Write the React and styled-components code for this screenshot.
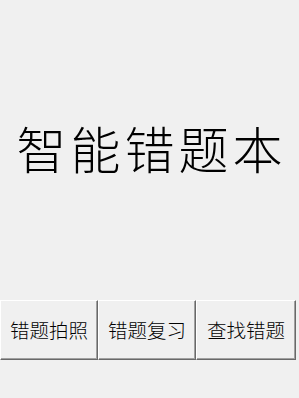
import styled, { createGlobalStyle } from "styled-components";

const GlobalStyle = createGlobalStyle`
  html, body {
    margin: 0;
    padding: 0;
    background: #f0f0f0;
  }
`;

const Form = styled.div`
  display: flex;
  flex-direction: column;
  width: 299px;
  height: 398px;
  background: #f0f0f0;
`;

const Title = styled.div`
  display: flex;
  justify-content: center;
  align-items: center;
  height: 300px;
  padding-bottom: 7px;
  padding-left: 4px;
  font-family: "Noto Sans CJK SC", sans-serif;
  font-weight: 300;
  font-size: 50px;
  letter-spacing: 4px;
  color: #000;
  box-sizing: border-box;
`;

const ButtonRow = styled.div`
  display: flex;
  gap: 0;
`;

const Button = styled.button`
  display: flex;
  justify-content: center;
  align-items: center;
  width: ${(props) => props.w}px;
  height: 60px;
  margin: 0;
  padding: 0 0 2px 0;
  background: #f0f0f0;
  border-top: 1px solid #ffffff;
  border-left: 1px solid #ffffff;
  border-right: 1px solid #696969;
  border-bottom: 1px solid #696969;
  box-shadow: inset -1px -1px 0 #a0a0a0;
  font-family: "Noto Sans CJK SC", sans-serif;
  font-weight: 300;
  font-size: 19.5px;
  color: #000;
`;

export default function App() {
  return (
    <Form>
      <GlobalStyle />
      <Title>智能错题本</Title>
      <ButtonRow>
        <Button w={98}>错题拍照</Button>
        <Button w={98}>错题复习</Button>
        <Button w={100}>查找错题</Button>
      </ButtonRow>
    </Form>
  );
}
